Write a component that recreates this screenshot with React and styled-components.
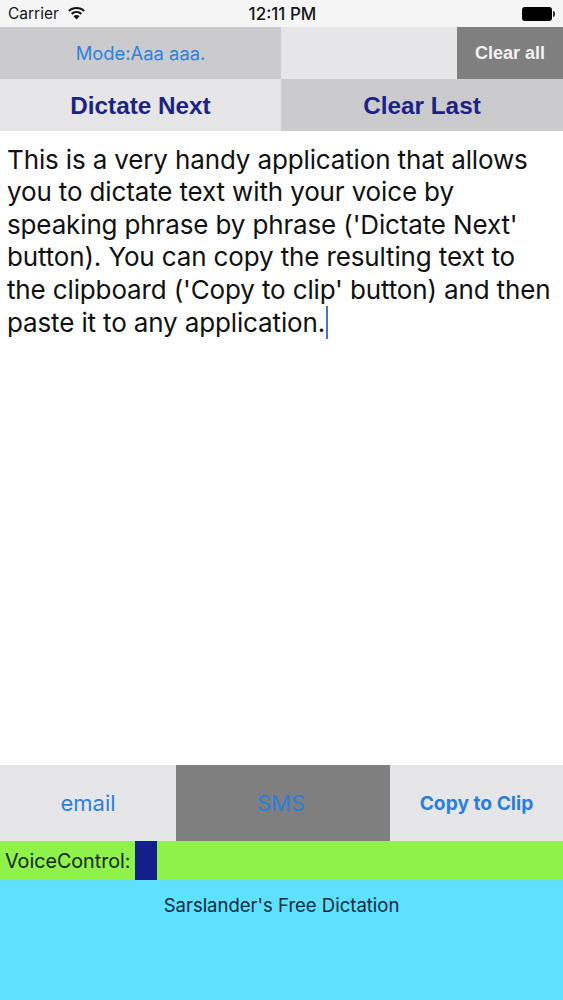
import React from "react";
import styled, { createGlobalStyle } from "styled-components";

const GlobalStyle = createGlobalStyle`
    html, body {
        margin: 0;
        padding: 0;
        background: #fff;
    }
    body {
        font-family: "Inter", "Liberation Sans", sans-serif;
    }
`;

const Screen = styled.div`
    width: 563px;
    height: 1000px;
    display: flex;
    flex-direction: column;
    overflow: hidden;
`;

const StatusBar = styled.div`
    flex: none;
    height: 27px;
    background: #f5f5f6;
    display: grid;
    grid-template-columns: 1fr auto 1fr;
    align-items: center;
    padding: 0 8px;
    font-size: 15.5px;
    color: #161616;
`;

const Carrier = styled.div`
    display: flex;
    align-items: center;
    gap: 9px;
`;

const Clock = styled.div`
    font-size: 17px;
    font-weight: 500;
    margin-left: 2px;
`;

const Battery = styled.div`
    justify-self: end;
    width: 30px;
    height: 14px;
    margin-right: 3px;
    border-radius: 3px;
    background: #000;
    position: relative;

    &::after {
        content: "";
        position: absolute;
        right: -3px;
        top: 4px;
        width: 2px;
        height: 6px;
        background: #333;
        border-radius: 0 2px 2px 0;
    }
`;

const TopRow = styled.div`
    flex: none;
    display: grid;
    grid-template-columns: 281px 176px 106px;
    height: 52px;
`;

const ActionRow = styled.div`
    flex: none;
    display: grid;
    grid-template-columns: 281px 282px;
    height: 52px;
`;

const Cell = styled.div`
    display: flex;
    align-items: center;
    justify-content: center;
    background: ${(p) => p.$bg};
`;

const ModeLabel = styled.span`
    font-size: 18.4px;
    color: #2a84dc;
`;

const ClearAll = styled.span`
    font-family: "Liberation Sans", sans-serif;
    font-size: 18px;
    font-weight: 700;
    color: #f2f2f2;
`;

const BigAction = styled.span`
    font-family: "Liberation Sans", sans-serif;
    font-size: 24.3px;
    font-weight: 700;
    color: #1b2383;
    margin-top: 2px;
`;

const TextBody = styled.div`
    flex: 1;
    background: #fff;
    padding: 13px 0 0 7px;
    font-size: 26px;
    letter-spacing: -0.14px;
    line-height: 32.4px;
    color: #111;
`;

const TextLine = styled.div`
    white-space: nowrap;
`;

const Caret = styled.span`
    display: inline-block;
    width: 2px;
    height: 33px;
    margin-left: 1px;
    vertical-align: -7px;
    background: #4a72cc;
`;

const BottomRow = styled.div`
    flex: none;
    display: grid;
    grid-template-columns: 176px 214px 173px;
    height: 76px;
`;

const BottomLabel = styled.span`
    font-weight: ${(p) => (p.$bold ? 700 : 400)};
    font-size: ${(p) => (p.$bold ? "19.2px" : "22px")};
    color: #2a7fdc;
`;

const SmsLabel = styled(BottomLabel)`
    margin-right: 4px;
`;

const VoiceBar = styled.div`
    flex: none;
    height: 39px;
    background: #8ff24a;
    display: flex;
    align-items: stretch;
    padding-left: 5px;
`;

const VoiceLabel = styled.span`
    align-self: center;
    font-size: 19.7px;
    color: #14240c;
    margin-right: 5px;
`;

const VoiceLevel = styled.div`
    width: 22px;
    background: #14208a;
`;

const AdBanner = styled.div`
    flex: none;
    height: 120px;
    box-sizing: border-box;
    background: #5ee0ff;
    padding-top: 14px;
    text-align: center;
    font-size: 18.5px;
    line-height: 22px;
    color: #0b2a3a;
`;

const textLines = [
    "This is a very handy application that allows",
    "you to dictate text with your voice by",
    "speaking phrase by phrase ('Dictate Next'",
    "button). You can copy the resulting text to",
    "the clipboard ('Copy to clip' button) and then",
];

function WifiIcon() {
    return (
        <svg width="17" height="13" viewBox="0 0 17 13" fill="#161616">
            <path d="M8.5 0C5.2 0 2.4 1.2 0.2 3.2L1.6 4.7C3.4 3 5.8 2 8.5 2s5.1 1 6.9 2.7l1.4-1.5C14.6 1.2 11.8 0 8.5 0z" />
            <path d="M8.5 4C6.3 4 4.4 4.8 3 6.2l1.4 1.5C5.5 6.7 6.9 6 8.5 6s3 .7 4.1 1.7L14 6.2C12.6 4.8 10.7 4 8.5 4z" />
            <path d="M8.5 8c-1.2 0-2.2.4-3 1.2L8.5 12.6l3-3.4C10.7 8.4 9.7 8 8.5 8z" />
        </svg>
    );
}

export default function App() {
    return (
        <>
            <GlobalStyle />
            <Screen>
                <StatusBar>
                    <Carrier>
                        Carrier
                        <WifiIcon />
                    </Carrier>
                    <Clock>12:11 PM</Clock>
                    <Battery />
                </StatusBar>
                <TopRow>
                    <Cell $bg="#cbcbcd">
                        <ModeLabel>Mode:Aaa aaa.</ModeLabel>
                    </Cell>
                    <Cell $bg="#e6e6e8" />
                    <Cell $bg="#7f7f7f">
                        <ClearAll>Clear all</ClearAll>
                    </Cell>
                </TopRow>
                <ActionRow>
                    <Cell $bg="#e6e6e8">
                        <BigAction>Dictate Next</BigAction>
                    </Cell>
                    <Cell $bg="#cbcbcd">
                        <BigAction>Clear Last</BigAction>
                    </Cell>
                </ActionRow>
                <TextBody>
                    {textLines.map((line) => (
                        <TextLine key={line}>{line}</TextLine>
                    ))}
                    <TextLine>
                        paste it to any application.
                        <Caret />
                    </TextLine>
                </TextBody>
                <BottomRow>
                    <Cell $bg="#e6e6e8">
                        <BottomLabel>email</BottomLabel>
                    </Cell>
                    <Cell $bg="#7f7f7f">
                        <SmsLabel>SMS</SmsLabel>
                    </Cell>
                    <Cell $bg="#e6e6e8">
                        <BottomLabel $bold>Copy to Clip</BottomLabel>
                    </Cell>
                </BottomRow>
                <VoiceBar>
                    <VoiceLabel>VoiceControl:</VoiceLabel>
                    <VoiceLevel />
                </VoiceBar>
                <AdBanner>Sarslander's Free Dictation</AdBanner>
            </Screen>
        </>
    );
}
